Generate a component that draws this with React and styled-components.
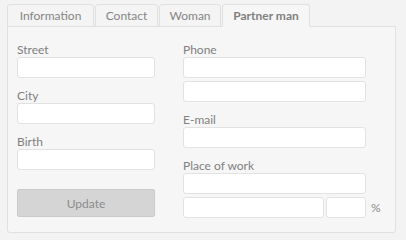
import React from "react";
import styled, { createGlobalStyle } from "styled-components";

const Global = createGlobalStyle`
  html, body { margin: 0; padding: 0; background: #f3f3f3; }
  body { font-family: Lato, "Open Sans", sans-serif; }
  * { box-sizing: border-box; }
`;

const Wrap = styled.div`
  padding: 4px 0 0 7px;
  width: 406px;
  height: 240px;
`;

const TabBar = styled.div`
  display: flex;
  gap: 1px;
  position: relative;
  z-index: 1;
`;

const Tab = styled.div`
  height: 23px;
  width: ${(p) => p.$w}px;
  display: flex;
  align-items: center;
  justify-content: center;
  font-size: 12px;
  color: ${(p) => (p.$active ? "#7f7f7f" : "#858585")};
  font-weight: ${(p) => (p.$active ? 700 : 400)};
  background: ${(p) => (p.$active ? "#f6f6f6" : "#f4f4f4")};
  border: 1px solid #e0e0e0;
  border-bottom-color: ${(p) => (p.$active ? "#f6f6f6" : "#e0e0e0")};
  border-radius: 3px 3px 0 0;
  margin-bottom: -1px;
`;

const Panel = styled.div`
  width: 389px;
  height: 207px;
  background: #f6f6f6;
  border: 1px solid #e0e0e0;
  border-radius: 0 0 3px 3px;
  padding: 5px 9px 0;
  display: grid;
  grid-template-columns: 138px 183px;
  column-gap: 28px;
  align-items: start;
`;

const Column = styled.div`
  display: flex;
  flex-direction: column;
`;

const Label = styled.label`
  display: block;
  font-size: 12px;
  line-height: 14px;
  padding-top: 11px;
  color: #808080;
`;

const Input = styled.div`
  height: 21px;
  width: ${(p) => (p.$w ? `${p.$w}px` : "100%")};
  background: #ffffff;
  border: 1px solid #e2e2e2;
  border-radius: 3px;
  flex: none;
`;

const Stack = styled.div`
  display: flex;
  flex-direction: column;
  gap: 3px;
`;

const Row = styled.div`
  display: flex;
  align-items: center;
  gap: 2px;
`;

const Percent = styled.span`
  font-size: 12px;
  color: #8a8a8a;
  margin-left: 3px;
`;

const Button = styled.div`
  margin-top: 19px;
  height: 28px;
  background: #d5d5d5;
  border: 1px solid #cacaca;
  border-radius: 2px;
  display: flex;
  align-items: center;
  justify-content: center;
  font-size: 12px;
  color: #8c8c8c;
`;

export default function App() {
  return (
    <>
      <Global />
      <Wrap>
        <TabBar>
          <Tab $w={87}>Information</Tab>
          <Tab $w={63}>Contact</Tab>
          <Tab $w={62}>Woman</Tab>
          <Tab $w={88} $active>Partner man</Tab>
        </TabBar>
        <Panel>
          <Column>
            <Label>Street</Label>
            <Input />
            <Label>City</Label>
            <Input />
            <Label>Birth</Label>
            <Input />
            <Button>Update</Button>
          </Column>
          <Column>
            <Label>Phone</Label>
            <Stack>
              <Input />
              <Input />
            </Stack>
            <Label>E-mail</Label>
            <Input />
            <Label>Place of work</Label>
            <Stack>
              <Input />
              <Row>
                <Input $w={141} />
                <Input $w={40} />
                <Percent>%</Percent>
              </Row>
            </Stack>
          </Column>
        </Panel>
      </Wrap>
    </>
  );
}
